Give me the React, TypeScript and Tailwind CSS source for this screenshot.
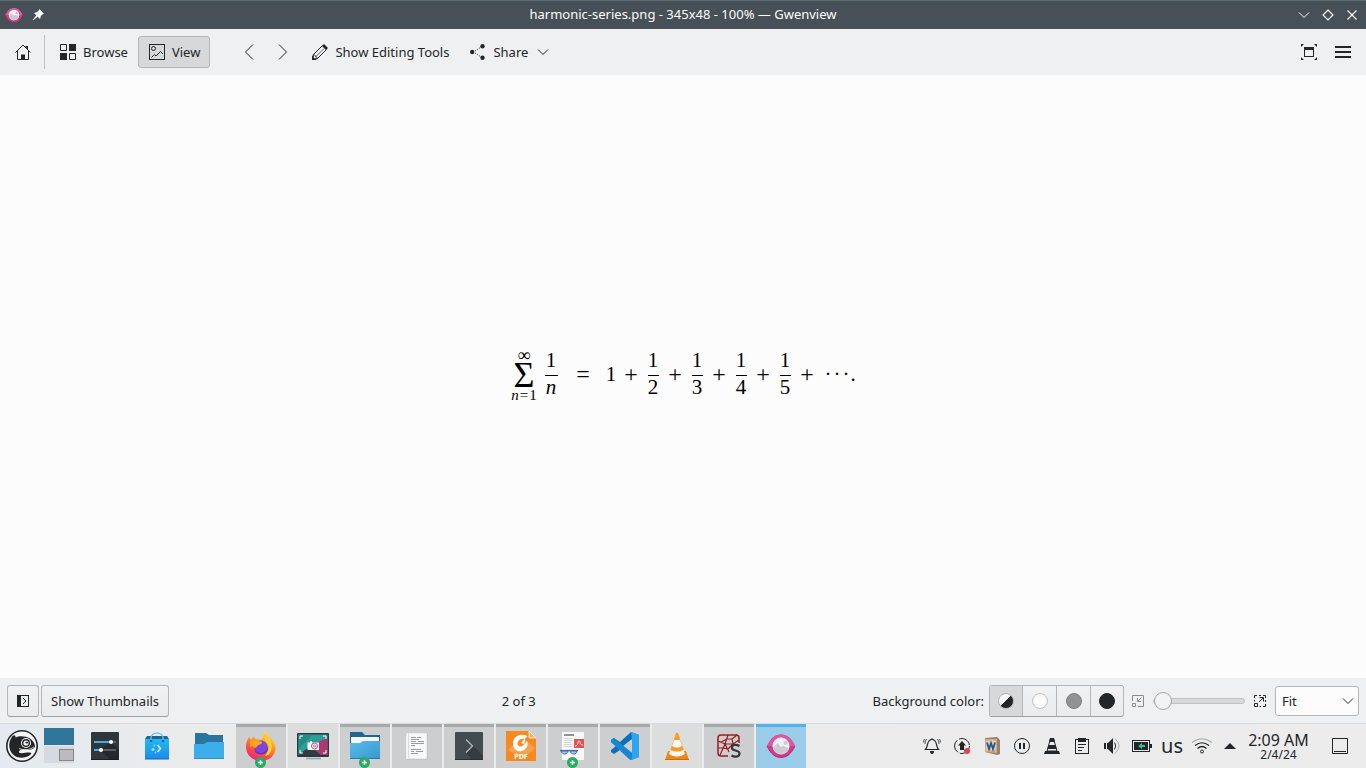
import type { ReactNode } from "react";

type IconProps = { className?: string };

const Svg = ({ s, vb, children, className }: { s: number; vb?: string; children: ReactNode; className?: string }) => (
  <svg width={s} height={s} viewBox={vb ?? `0 0 ${s} ${s}`} fill="none" className={className} aria-hidden="true">
    {children}
  </svg>
);

const INK = "#232629";

/* ---------- window and toolbar icons ---------- */

const GwenviewIcon = ({ s }: { s: number }) => (
  <Svg s={s} vb="0 0 32 32">
    <path d="M2 16C6 8 10 4.600 16 4.600S26 8 30 16C26 24 22 27.400 16 27.400S6 24 2 16Z" fill="#d6388a" />
    <path d="M2 16C6 8 10 4.600 16 4.600S26 8 30 16" fill="#e0559b" />
    <path d="M2 16C6 24 10 27.400 16 27.400S26 24 30 16" stroke="#a92b6c" strokeWidth="1" />
    <circle cx="16" cy="16" r="8.500" fill="#f2f2f4" />
    <path d="M8 18L12.500 13L16 17L18 15.500L24 18.500A8.500 8.500 0 0 1 8 18Z" fill="#c9cbd2" />
    <circle cx="20.500" cy="13" r="2" fill="#c9cbd2" />
  </Svg>
);

const PinIcon = () => (
  <Svg s={12}>
    <path d="M7.500 .5L11.500 4.500L10.500 5L8.500 7L8 9.500L5.500 7.500L1 11L4.500 6.500L2.500 4L5 3.500L7 1.500Z" fill="#fcfcfc" stroke="#fcfcfc" strokeWidth=".6" />
  </Svg>
);

const Chevron = ({ className }: IconProps) => (
  <svg width="12" height="8" viewBox="0 0 12 8" fill="none" className={className} aria-hidden="true">
    <path d="M1 1.500L6 6.500L11 1.500" stroke="currentColor" strokeWidth="1" />
  </svg>
);

const HomeIcon = () => (
  <Svg s={16}>
    <path d="M.5 8.500L8 1L15.500 8.500M2.500 7V15.500H13.500V7" stroke={INK} />
    <path d="M6 10.500H10V16H6ZM10 2H13V6Z" fill={INK} />
  </Svg>
);

const BrowseIcon = () => (
  <Svg s={16}>
    <path d="M9 0H16V7H9ZM0 9H7V16H0Z" fill={INK} />
    <path d="M.5 .5H6.500V6.500H.5ZM9.500 9.500H15.500V15.500H9.500Z" stroke={INK} />
  </Svg>
);

const ViewIcon = () => (
  <Svg s={16}>
    <rect x=".5" y=".5" width="15" height="15" stroke={INK} />
    <circle cx="4.500" cy="4.500" r="2" stroke={INK} />
    <path d="M2.500 13.500L5.500 10.500L7 12L11.500 7.500L14 10" stroke={INK} />
  </Svg>
);

const PencilIcon = () => (
  <Svg s={16}>
    <path d="M1 11L10.500 1.500L14.500 5.500L5 15H1Z" stroke={INK} />
    <path d="M10 2L12 0L16 4L14 6ZM0 12L1.500 12V14.500H4V16H0Z" fill={INK} />
    <path d="M1 11H3L3.500 13H5V15M4 12.500L12 4.500" stroke={INK} strokeWidth=".7" />
  </Svg>
);

const ShareIcon = () => (
  <Svg s={16}>
    <circle cx="2.200" cy="8" r="2.200" fill={INK} />
    <circle cx="12.500" cy="2.200" r="2.200" fill={INK} />
    <circle cx="12.500" cy="13.800" r="2.200" fill={INK} />
    <path d="M5 7L10.500 3.500M5 9L10.500 12.500" stroke={INK} strokeDasharray="1 1.500" />
  </Svg>
);

const FullscreenIcon = () => (
  <Svg s={16}>
    <path d="M3 3H13V6H3Z" fill={INK} />
    <rect x="3.500" y="3.500" width="9" height="9" stroke={INK} />
    <path d="M0 0H3L0 3ZM16 0H13L16 3ZM0 16H3L0 13ZM16 16H13L16 13Z" fill={INK} />
  </Svg>
);

const MenuIcon = () => (
  <Svg s={16}>
    <path d="M0 3H16M0 8H16M0 13H16" stroke={INK} strokeWidth="2" />
  </Svg>
);

const SidebarIcon = () => (
  <Svg s={12}>
    <rect x=".5" y=".5" width="11" height="11" stroke={INK} />
    <path d="M0 0H4V12H0Z" fill={INK} />
    <path d="M6 3L9 6L6 9" stroke={INK} />
  </Svg>
);

const ZoomOutIcon = () => (
  <Svg s={12}>
    <path d="M.5 6V.5H11.500V11.500H6M.5 8.500H3.500V11.500H.5Z" stroke="#8b8d8f" />
    <path d="M9.500 2.500L5.500 6.500M5.500 3V6.500H9" stroke="#8b8d8f" />
  </Svg>
);

const ZoomInIcon = () => (
  <Svg s={12}>
    <path d="M.5 3V.5H3M5 .5H7M9 .5H11.500V3M11.500 5V7M11.500 9V11.500H9M7 11.500H5.500M.5 5V6.500" stroke={INK} />
    <path d="M.5 8.500H3.500V11.500H.5ZM5 7L9 3M5.500 2.500H9.500V6.500" stroke={INK} />
  </Svg>
);

/* ---------- taskbar icons ---------- */

const KickoffIcon = () => (
  <Svg s={32}>
    <circle cx="16" cy="16" r="15.200" fill="#f4f5f6" stroke={INK} strokeWidth="1.600" />
    <path d="M5.500 7.500C7 4.500 10 4.500 9.500 7.500C13 5.500 20 6 24 8.500C27 10.500 29 13.500 29 16.500C28 19.500 23 20.500 18 19.500C14.500 19 12.500 20.500 13 22.500C15 24 19 22.500 23 22.500C26 22.500 26 23.500 24 25C19 29 11 28.500 7 24.500C2.500 20 2 13 5.500 7.500Z" fill={INK} />
    <path d="M13 18.500C18 20.500 24 20 28 16.800" stroke="#f4f5f6" strokeWidth=".8" />
    <circle cx="20" cy="13" r="5" fill="#f4f5f6" />
    <circle cx="20" cy="13" r="4" fill={INK} />
    <circle cx="20" cy="13" r="2.600" fill="#f4f5f6" />
    <ellipse cx="20.800" cy="12.600" rx="1.400" ry=".9" fill={INK} />
  </Svg>
);

const SettingsIcon = () => (
  <Svg s={28}>
    <rect width="28" height="28" rx="1" fill="#31363b" />
    <path d="M20 10L28 18V28H20L9 18Z" fill="#24282c" />
    <path d="M3 10H25M3 18H25" stroke="#5b6065" strokeWidth="2" />
    <path d="M3 10H19M3 18H9" stroke="#3daee9" strokeWidth="2" />
    <circle cx="20" cy="10" r="2" fill="#fff" />
    <circle cx="10" cy="18" r="2" fill="#fff" />
    <path d="M0 27.500H28" stroke="#1b1e21" />
  </Svg>
);

const DiscoverIcon = () => (
  <Svg s={28}>
    <defs>
      <linearGradient id="bag" x1="0" y1="0" x2="0" y2="1">
        <stop stopColor="#22b8f5" />
        <stop offset="1" stopColor="#1c8ae8" />
      </linearGradient>
    </defs>
    <path d="M4 4H24L26 7H2Z" fill="#24648a" />
    <rect x="2" y="7" width="24" height="20" fill="url(#bag)" />
    <path d="M2 27H26" stroke="#1769b0" />
    <path d="M8 9V6C8 -.5 20 -.5 20 6V9" stroke="#63c6f0" strokeWidth="1.300" />
    <circle cx="8" cy="9" r="1.300" fill="#186a9b" />
    <circle cx="20" cy="9" r="1.300" fill="#186a9b" />
    <path d="M14.500 13L17.500 16.500L14.500 20" stroke="#c9ecfd" strokeWidth="1.800" />
    <circle cx="11.500" cy="13.500" r="1" fill="#7fd0f9" />
    <circle cx="10" cy="17.500" r="1.500" fill="#9fdcfa" />
    <circle cx="12.500" cy="20.500" r=".9" fill="#7fd0f9" />
  </Svg>
);

const FolderIcon = () => (
  <Svg s={30}>
    <path d="M1 2H12L15 4H29V20H1Z" fill="#2a75a0" />
    <path d="M0 13H10L13 11H30V28H0Z" fill="#3daee9" />
    <path d="M0 27.500H30" stroke="#2f8fc2" />
  </Svg>
);

const FirefoxIcon = () => (
  <Svg s={32}>
    <defs>
      <linearGradient id="fox" x1=".8" y1="0" x2=".3" y2="1">
        <stop stopColor="#fff04a" />
        <stop offset=".4" stopColor="#ff9a22" />
        <stop offset=".75" stopColor="#ff4545" />
        <stop offset="1" stopColor="#e8258d" />
      </linearGradient>
    </defs>
    <path d="M4 7L6 10L9 6L10 9L16 10L18 7L19 1C22 3 24 6 25 9L26 8C30 12 31 16 30.500 20C29 27 23 31 16 31C8 31 1 25 1 17C1 13 2 10 4 7Z" fill="url(#fox)" />
    <circle cx="16" cy="17" r="6.500" fill="#8043df" />
    <path d="M9.500 18C11 24 21 26 22.500 16C24 20 22 24.500 16 24.500C11 24.500 9 21 9.500 18Z" fill="#5b36bb" />
    <path d="M5 11C9 9 12 11 16 11.500C18 12 17 14 15 14.500C12 15 13 17 10 18L8 16L5 17Z" fill="#ffa61f" />
    <path d="M20 7C26 10 28 15 26 21C25 24 22 26 20 26C25 19 25 14 20 11Z" fill="#ffd432" />
  </Svg>
);

const SpectacleIcon = () => (
  <Svg s={32}>
    <rect y="3" width="32" height="24" rx="1" fill="#31363b" />
    <path d="M1.500 4.500H30.500V25H1.500Z" fill="#2aa198" />
    <path d="M1.500 4.500H16L1.500 19Z" fill="#268a86" />
    <path d="M30.500 8V25H24L14 15Z" fill="#ad3570" />
    <path d="M1.500 25L12 17L17 19L24 25Z" fill="#333c42" />
    <path d="M3 9V6H6M26 6H29V9M3 20V23H6M26 23H29V20" stroke="#fff" />
    <path d="M10.500 12.500H13V11H15V12.500H22V20H10.500Z" fill="#fff" />
    <circle cx="17.500" cy="16" r="3" fill="#fff" stroke="#b34b7e" />
    <circle cx="17.500" cy="16" r="1" stroke="#b34b7e" strokeWidth=".8" />
    <path d="M9 28.500H24" stroke="#91a9b8" strokeWidth="1.600" />
  </Svg>
);

const FileManagerIcon = () => (
  <Svg s={32}>
    <defs>
      <linearGradient id="fm" x1="0" y1="0" x2="1" y2="1">
        <stop stopColor="#5bbce9" />
        <stop offset="1" stopColor="#3598d0" />
      </linearGradient>
    </defs>
    <path d="M1 2H13L16 5H31V22H1Z" fill="#24658f" />
    <path d="M2 7H30V14H2Z" fill="#f4f6f7" />
    <path d="M1 13H11L14 11H31V29H1Z" fill="url(#fm)" />
    <path d="M1 28.500H31" stroke="#2877aa" />
  </Svg>
);

const DocumentIcon = () => (
  <Svg s={28}>
    <path d="M4 2H25V28H4Z" fill="#c0c1c2" />
    <path d="M3 1H24V27H3Z" fill="#f9f9f9" stroke="#cfd0d1" strokeWidth=".6" />
    <path d="M5.500 1V27" stroke="#dcdddd" />
    <path d="M8 5.500H13M14 5.500H18M8 7.500H16M8 9.500H13M15 9.500H21M8 11.500H21M8 13.500H12M8 17.500H18M8 19.500H11M13 19.500H20M8 21.500H15" stroke="#9a9c9e" />
  </Svg>
);

const KonsoleIcon = () => (
  <Svg s={28}>
    <rect width="28" height="28" rx="1" fill="#414b50" />
    <path d="M11 7L28 24V28H18L11 21L17 14Z" fill="#343c41" />
    <path d="M11 7.500L17.500 14L11 20.500" stroke="#b7bfc3" strokeWidth="1.200" />
    <path d="M0 27.500H28" stroke="#293034" />
  </Svg>
);

const PdfIcon = () => (
  <Svg s={32}>
    <path d="M1 1H24L31 8V31H1Z" fill="#f68a1f" />
    <path d="M24 1L31 8H24Z" fill="#fbb66c" stroke="#fff" strokeWidth=".7" />
    <path d="M3 20L17 7L30 18L18 29Z" fill="#f8a04b" />
    <path d="M22.500 6C14 2.500 8 7 8 13.500C8 20 13 22 17 21C21 20 24 15 22 11L19 15.500L20 9Z" fill="#fff" />
    <path d="M12.500 13C13.500 9 17 8 19.500 9L16 13L19 14C17 18 12 17 12.500 13Z" fill="#f68a1f" />
    <text x="16" y="29" textAnchor="middle" fill="#fff" fontSize="7" fontWeight="700" fontFamily="Noto Sans, sans-serif">PDF</text>
  </Svg>
);

const OkularIcon = () => (
  <Svg s={32}>
    <path d="M5 2H27V30H5Z" fill="#f8f8f8" />
    <path d="M7 5H17" stroke="#2d3033" />
    <path d="M7 8.500H15M7 10.500H15M7 12.500H15M7 14.500H15M7 16.500H15" stroke="#d3d5d6" />
    <rect x="17" y="9" width="10" height="9" fill="#eb4e4e" />
    <path d="M18 16C22 16 20 11 22 11S22 15 26 15" stroke="#fff" />
    <path d="M3 20.500H21" stroke="#426ca2" strokeWidth="1.200" />
    <path d="M4 21H11C11 25 5 25 4 21ZM13 21H20C20 25 14 25 13 21Z" fill="#a9c5e5" stroke="#426ca2" />
  </Svg>
);

const CodeIcon = () => (
  <Svg s={28}>
    <path d="M20 0L28 3V25L20 28L9 18L3 22L0 20V18L5 14L0 10V8L3 6L9 10ZM21 7L12 14L21 21Z" fill="#0b70b7" fillRule="evenodd" />
    <path d="M20 0L28 3V25L20 28L21 21V7Z" fill="#2aa5f2" />
    <path d="M3 6L0 8V10L18 27L20 28L21 21Z" fill="#1787cf" />
  </Svg>
);

const ConeIcon = () => (
  <Svg s={28}>
    <path d="M5 19H23L26 28H2Z" fill="#ef8615" />
    <path d="M13 1Q14 0 15 1L22 22Q14 27 6 22Z" fill="#fa9c22" />
    <path d="M11 8H17L19 14Q14 17 9 14ZM7.500 18Q14 21 20.500 18L22 22Q14 27 6 22Z" fill="#f8f8f8" />
    <path d="M2 27.500H26" stroke="#c96c0a" />
  </Svg>
);

const SpyderIcon = () => (
  <Svg s={26}>
    <path d="M12 23H5Q2 23 2 20V5Q2 2 5 2H20Q23 2 23 5V10" stroke="#9b1c20" strokeWidth="1.500" />
    <path d="M9 11L2 8M9 11L12 2M9 11L17 11L23 7M9 11L4 22M9 11L13 19M2 15L7 15L12 16L17 11L16 6L11 6L5 9M16 6L21 2" stroke="#9b1c20" strokeWidth="1.200" />
    <path d="M23.500 13C20 11 15.500 11.500 16 15C16 18.500 23.500 16.500 23.500 20.500C23.500 24 18.500 24.500 15.500 22.500" stroke="#31373b" strokeWidth="2.200" />
  </Svg>
);

const BellIcon = () => (
  <Svg s={18}>
    <path d="M2.500 12.500C5 10 4 4.500 6.500 3.500L9 2L11.500 3.500C14 4.500 13 10 15.500 12.500Z" stroke={INK} strokeWidth="1.200" />
    <path d="M7 14H11Q11 17 9 17Q7 17 7 14Z" fill={INK} />
    <path d="M3.500 2Q2 4 2 7M1.500 2Q.5 3.500 .5 5.500M14.500 2Q16 4 16 7M16.500 2Q17.500 3.500 17.500 5.500" stroke={INK} strokeWidth=".8" />
  </Svg>
);

const UpdateIcon = () => (
  <Svg s={18}>
    <circle cx="9" cy="9" r="7.500" stroke={INK} strokeDasharray="14 2" />
    <path d="M9 4L13 8.500H11V13H7V8.500H5Z" fill={INK} />
    <circle cx="14" cy="14" r="3" fill="#e23f52" />
  </Svg>
);

const BookIcon = () => (
  <Svg s={18}>
    <path d="M2 1L14 0L17 3V17L14 18L2 15Z" fill="#98826e" />
    <path d="M2 2H14V16L2 15Z" fill="#d9a77c" />
    <path d="M3 4L9 3L13 4V13L3 14Z" fill="#e3cdb2" />
    <path d="M4 5.500L6 12L8 6L10 12L12 5.500" stroke="#1c5b96" strokeWidth="1.800" />
  </Svg>
);

const PauseIcon = () => (
  <Svg s={18}>
    <circle cx="9" cy="9" r="7.500" stroke={INK} />
    <path d="M6 6H8V12H6ZM10 6H12V12H10Z" fill={INK} />
  </Svg>
);

const ConeTrayIcon = () => (
  <Svg s={18}>
    <path d="M7 1H11L12 5H6ZM5.500 8H12.500L13.500 12H4.500ZM1 17L2 14H16L17 17Z" fill={INK} />
    <path d="M7.500 1.500H10.500L14 14H4Z" stroke={INK} />
  </Svg>
);

const ClipboardIcon = () => (
  <Svg s={18}>
    <rect x="2.500" y="2.500" width="13" height="14" stroke={INK} />
    <path d="M5 1H13V5H5Z" fill={INK} />
    <path d="M5 7.500H13M5 10.500H11M5 13.500H9" stroke={INK} />
  </Svg>
);

const VolumeIcon = () => (
  <Svg s={18}>
    <path d="M1 6H3V12H1ZM4 6H5L10 1V17L5 12H4Z" fill={INK} />
    <path d="M11.500 5.500Q14 9 11.500 12.500" stroke={INK} />
    <path d="M12 1.500Q20 9 12 16.500" stroke="#a8abad" />
  </Svg>
);

const BatteryIcon = () => (
  <Svg s={20}>
    <rect x=".5" y="4.500" width="17" height="11" stroke={INK} />
    <path d="M2 6H16V14H2ZM18 8H20V12H18Z" fill={INK} />
    <path d="M6 10L10 7V9H13V11H10V13Z" fill="#27c29b" />
  </Svg>
);

const WifiIcon = () => (
  <svg width="22" height="18" viewBox="0 0 22 18" fill="none" aria-hidden="true">
    <circle cx="11" cy="14.500" r="1.500" stroke={INK} />
    <path d="M6.500 11.500Q11 7.500 15.500 11.500M4 8.500Q11 3 18 8.500" stroke={INK} strokeWidth="1.200" />
    <path d="M1 5.500Q11 -2 21 5.500" stroke="#a8abad" strokeWidth="1.200" />
  </svg>
);

/* ---------- shared pieces ---------- */

const ToolButton = ({ icon, text, label, active, trailing }: { icon: ReactNode; text?: string; label?: string; active?: boolean; trailing?: ReactNode }) => (
  <button
    type="button"
    aria-label={label}
    aria-pressed={active}
    className={
      "flex h-8 shrink-0 items-center justify-center rounded-[3px] border " +
      (text ? "gap-[7px] pl-[10px] pr-[9px] " : "w-8 ") +
      (active ? "border-[#b4b6b8] bg-[#d6d8da]" : "border-transparent")
    }
  >
    {icon}
    {text && <span className="whitespace-nowrap pt-[2px]">{text}</span>}
    {trailing}
  </button>
);

const Fraction = ({ bottom, italic }: { bottom: string; italic?: boolean }) => (
  <span className={"flex flex-col items-center " + (italic ? "w-[13px]" : "w-[11px]")}>
    <span className="flex h-[26px] w-full items-center justify-center border-b border-black pb-[3px]">1</span>
    <span className={"flex h-[26px] items-center pb-[2px] " + (italic ? "italic" : "")}>{bottom}</span>
  </span>
);

const Operator = ({ children }: { children: string }) => (
  <span className="flex w-[13px] justify-center pb-1 text-2xl leading-none">{children}</span>
);

const Formula = () => (
  <div className="flex items-center gap-[10px] font-['Liberation_Serif',serif] text-[21px] leading-none text-black">
    <span className="flex items-center gap-[7px]">
      <span className="flex w-[27px] flex-col items-center">
        <span className="h-3 text-lg leading-[10px]">∞</span>
        <span className="h-[26px] text-4xl leading-[26px]">Σ</span>
        <span className="flex h-[14px] gap-px text-[15px] leading-[14px]">
          <i>n</i>
          <span>=</span>
          <span>1</span>
        </span>
      </span>
      <Fraction bottom="n" italic />
    </span>
    <span className="pl-[9px] pr-[6px]">
      <Operator>=</Operator>
    </span>
    <span className="-mr-[2px] w-[11px] pb-[2px] text-center">1</span>
    {["2", "3", "4", "5"].map((n) => (
      <span key={n} className="flex items-center gap-[10px]">
        <Operator>+</Operator>
        <Fraction bottom={n} />
      </span>
    ))}
    <Operator>+</Operator>
    <span className="flex pb-[2px]">
      <span className="w-[9px] text-center">·</span>
      <span className="w-[9px] text-center">·</span>
      <span className="w-[9px] text-center">·</span>
      <span className="w-[5px] text-center">.</span>
    </span>
  </div>
);

const swatches = [
  { name: "Automatic", fill: "bg-[linear-gradient(135deg,#fcfcfc_50%,#232629_50%)] border-[#b0b2b4]" },
  { name: "Light", fill: "bg-[#fcfcfc] border-[#bfc1c3]" },
  { name: "Neutral", fill: "bg-[#909294] border-[#7c7e80]" },
  { name: "Dark", fill: "bg-[#232629] border-[#232629]" },
];

type Task = { name: string; icon: ReactNode; tone: "open" | "idle" | "active"; plus?: boolean };

const tasks: Task[] = [
  { name: "Firefox", icon: <FirefoxIcon />, tone: "open", plus: true },
  { name: "Spectacle", icon: <SpectacleIcon />, tone: "idle" },
  { name: "File Manager", icon: <FileManagerIcon />, tone: "open", plus: true },
  { name: "Text Editor", icon: <DocumentIcon />, tone: "open" },
  { name: "Konsole", icon: <KonsoleIcon />, tone: "open" },
  { name: "PDF Reader", icon: <PdfIcon />, tone: "open" },
  { name: "Okular", icon: <OkularIcon />, tone: "open", plus: true },
  { name: "Code", icon: <CodeIcon />, tone: "open" },
  { name: "VLC", icon: <ConeIcon />, tone: "idle" },
  { name: "Spyder", icon: <SpyderIcon />, tone: "open" },
  { name: "Gwenview", icon: <GwenviewIcon s={32} />, tone: "active" },
];

const tones = {
  open: "border-[#a8a9ab] bg-[#cdced0]",
  idle: "border-[#dcdddd] bg-[#dcdddd]",
  active: "border-[#4fb3ec] bg-[#9bcdea]",
};

const tray = [
  { name: "Notifications", icon: <BellIcon /> },
  { name: "Updates", icon: <UpdateIcon /> },
  { name: "Dictionary", icon: <BookIcon /> },
  { name: "Pause", icon: <PauseIcon /> },
  { name: "VLC", icon: <ConeTrayIcon /> },
  { name: "Clipboard", icon: <ClipboardIcon /> },
  { name: "Volume", icon: <VolumeIcon /> },
  { name: "Battery", icon: <BatteryIcon /> },
  { name: "Keyboard layout", icon: <span className="text-xl leading-none">us</span> },
  { name: "Network", icon: <WifiIcon /> },
];

const TitleBar = () => (
  <header className="flex h-[29px] shrink-0 items-center border-t border-[#5d6b75] bg-[#475057] text-[#fcfcfc]">
    <div className="flex flex-1 items-center gap-2 pl-1">
      <GwenviewIcon s={20} />
      <PinIcon />
    </div>
    <h1 className="pr-[2px] pb-px text-[13px]">harmonic-series.png - 345x48 - 100% — Gwenview</h1>
    <div className="flex flex-1 justify-end pr-[2px]">
      <button type="button" aria-label="Minimize" className="flex w-6 items-center justify-center">
        <Chevron />
      </button>
      <button type="button" aria-label="Maximize" className="flex w-6 items-center justify-center">
        <Svg s={12}>
          <path d="M6 1L11 6L6 11L1 6Z" stroke="currentColor" strokeWidth="1.200" />
        </Svg>
      </button>
      <button type="button" aria-label="Close" className="flex w-6 items-center justify-center">
        <Svg s={12}>
          <path d="M1.500 1.500L10.500 10.500M10.500 1.500L1.500 10.500" stroke="currentColor" strokeWidth="1.200" />
        </Svg>
      </button>
    </div>
  </header>
);

const Toolbar = () => (
  <nav className="flex h-[46px] shrink-0 items-center bg-[#eff0f1] px-[7px]">
    <ToolButton icon={<HomeIcon />} label="Home" />
    <div className="mr-1 ml-[5px] h-[34px] w-px bg-[#bfc1c3]" />
    <ToolButton icon={<BrowseIcon />} text="Browse" />
    <ToolButton icon={<ViewIcon />} text="View" active />
    <div className="ml-[23px] mr-[2px] flex gap-[2px]">
      <ToolButton
        label="Previous"
        icon={
          <Svg s={16}>
            <path d="M12 .5L4.500 8L12 15.500" stroke={INK} />
          </Svg>
        }
      />
      <ToolButton
        label="Next"
        icon={
          <Svg s={16}>
            <path d="M4 .5L11.500 8L4 15.500" stroke={INK} />
          </Svg>
        }
      />
    </div>
    <ToolButton icon={<PencilIcon />} text="Show Editing Tools" />
    <ToolButton icon={<ShareIcon />} text="Share" trailing={<Chevron className="ml-[2px]" />} />
    <div className="ml-auto flex gap-[2px]">
      <ToolButton icon={<FullscreenIcon />} label="Full screen" />
      <ToolButton icon={<MenuIcon />} label="Menu" />
    </div>
  </nav>
);

const raised = "rounded-[3px] border border-[#b4b6b8] border-b-[#9fa1a3] bg-linear-to-b from-[#f1f2f3] to-[#eaebed]";

const StatusBar = () => (
  <section className="flex h-[45px] shrink-0 items-center bg-[#eff0f1] px-[7px]">
    <button type="button" aria-label="Show sidebar" className={"flex size-8 items-center justify-center " + raised}>
      <SidebarIcon />
    </button>
    <button type="button" className={"ml-[2px] h-8 px-[9px] pt-[2px] " + raised}>
      Show Thumbnails
    </button>
    <output className="flex-1 pt-[2px] pr-1 text-center">2 of 3</output>
    <fieldset className="flex items-center gap-[5px]">
      <span className="pt-[2px]">Background color:</span>
      <div className={"flex overflow-hidden " + raised}>
        {swatches.map((s, i) => (
          <label
            key={s.name}
            className="flex h-[30px] w-[34px] items-center justify-center border-l border-[#b4b6b8] first:w-8 first:border-l-0 last:w-[33px] has-checked:bg-[#d6d8da]"
          >
            <input type="radio" name="background" aria-label={s.name} defaultChecked={i === 0} className={"size-4 appearance-none rounded-full border " + s.fill} />
          </label>
        ))}
      </div>
    </fieldset>
    <div className="mr-[9px] ml-2 flex items-center gap-[9px]">
      <ZoomOutIcon />
      <input
        type="range"
        aria-label="Zoom"
        defaultValue={0}
        className="h-[18px] w-[92px] appearance-none bg-transparent [&::-webkit-slider-runnable-track]:h-[6px] [&::-webkit-slider-runnable-track]:rounded-full [&::-webkit-slider-runnable-track]:border [&::-webkit-slider-runnable-track]:border-[#c0c2c3] [&::-webkit-slider-runnable-track]:bg-[#d8dad9] [&::-webkit-slider-thumb]:-mt-[7px] [&::-webkit-slider-thumb]:size-[18px] [&::-webkit-slider-thumb]:appearance-none [&::-webkit-slider-thumb]:rounded-full [&::-webkit-slider-thumb]:border [&::-webkit-slider-thumb]:border-[#a4a6a8] [&::-webkit-slider-thumb]:bg-[#f2f3f4]"
      />
      <ZoomInIcon />
    </div>
    <div className="grid items-center">
      <select aria-label="Zoom level" className="col-start-1 row-start-1 h-[30px] w-[84px] appearance-none rounded-[3px] border border-[#b4b6b8] bg-[#fcfcfc] px-[6px] pt-[2px]">
        <option>Fit</option>
      </select>
      <Chevron className="pointer-events-none col-start-1 row-start-1 mr-[5px] justify-self-end" />
    </div>
  </section>
);

const Taskbar = () => (
  <footer className="flex h-[45px] shrink-0 items-stretch border-t border-[#d9dadb] bg-linear-to-r from-[#e4eaf0] via-[#ebebeb] via-15% to-[#ececec]">
    <button type="button" aria-label="Application launcher" className="flex w-11 items-center justify-center">
      <KickoffIcon />
    </button>
    <div className="mr-[5px] flex w-[30px] flex-col justify-center gap-px pb-px">
      <button type="button" aria-label="Desktop 1" className="h-[17px] bg-[#30769b]" />
      <button type="button" aria-label="Desktop 2" className="flex h-[17px] items-end justify-end bg-[#d5d9e0] pb-[2px]">
        <span className="h-3 w-[15px] border border-[#83878a] bg-[#b9bbc0]" />
      </button>
    </div>
    {[
      { name: "System Settings", icon: <SettingsIcon /> },
      { name: "Discover", icon: <DiscoverIcon /> },
      { name: "Files", icon: <FolderIcon /> },
    ].map((l) => (
      <button key={l.name} type="button" aria-label={l.name} className="flex w-[52px] items-center justify-center">
        {l.icon}
      </button>
    ))}
    <div className="ml-px flex gap-[2px]">
      {tasks.map((t) => (
        <button key={t.name} type="button" aria-label={t.name} className={"relative flex w-[50px] items-center justify-center border-t-3 pb-[3px] " + tones[t.tone]}>
          {t.icon}
          {t.plus && (
            <svg width="11" height="11" viewBox="0 0 11 11" className="absolute bottom-0 left-[19px]" aria-hidden="true">
              <circle cx="5.500" cy="5.500" r="5.500" fill="#27ae60" />
              <path d="M5.500 3V8M3 5.500H8" stroke="#fff" strokeWidth="1.300" />
            </svg>
          )}
        </button>
      ))}
    </div>
    <div className="ml-auto flex">
      {tray.map((t) => (
        <button key={t.name} type="button" aria-label={t.name} className="flex w-[30px] items-center justify-center">
          {t.icon}
        </button>
      ))}
      <button type="button" aria-label="Show hidden icons" className="flex w-[26px] items-center justify-center">
        <svg width="12" height="6" viewBox="0 0 12 6" aria-hidden="true">
          <path d="M0 6L6 0L12 6Z" fill={INK} />
        </svg>
      </button>
      <button type="button" className="flex w-[71px] flex-col items-center justify-center pt-px">
        <time className="text-base leading-[16px]">2:09 AM</time>
        <span className="text-xs leading-[14px]">2/4/24</span>
      </button>
      <button type="button" aria-label="Show desktop" className="flex w-[52px] items-center justify-center">
        <Svg s={16}>
          <path d="M.5 .5H15.500V15.500H.5ZM2 13.500H14" stroke={INK} />
        </Svg>
      </button>
    </div>
  </footer>
);

export default function App() {
  return (
    <div className="flex h-screen flex-col overflow-hidden font-['Noto_Sans',sans-serif] text-[13px] text-[#232629]">
      <TitleBar />
      <Toolbar />
      <main className="flex min-h-0 flex-1 items-center justify-center bg-[#fcfcfc] pb-[2px]">
        <Formula />
      </main>
      <StatusBar />
      <Taskbar />
    </div>
  );
}
